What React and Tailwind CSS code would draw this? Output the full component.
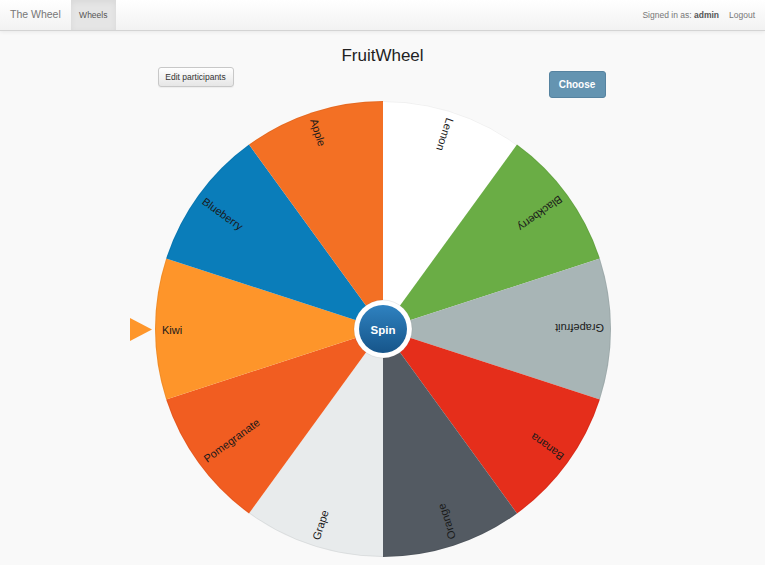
import React from 'react';

const slices = [
  { name: 'Lemon', color: '#ffffff' },
  { name: 'Blackberry', color: '#6aad45' },
  { name: 'Grapefruit', color: '#a8b5b6' },
  { name: 'Banana', color: '#e52e1b' },
  { name: 'Orange', color: '#535a62' },
  { name: 'Grape', color: '#e8ebec' },
  { name: 'Pomegranate', color: '#f15d21' },
  { name: 'Kiwi', color: '#fe952a' },
  { name: 'Blueberry', color: '#0a7dba' },
  { name: 'Apple', color: '#f37024' },
];

const CX = 228;
const CY = 229;
const R = 228;

const point = (deg) => {
  const a = (deg * Math.PI) / 180;
  return [CX + R * Math.sin(a), CY - R * Math.cos(a)];
};

const Wheel = () => {
  const step = 360 / slices.length;
  return (
    <svg width="456" height="458" viewBox="0 0 456 458" className="block">
      <defs>
        <linearGradient id="spinGrad" x1="0" y1="0" x2="0" y2="1">
          <stop offset="0%" stopColor="#2f82c0" />
          <stop offset="100%" stopColor="#16558a" />
        </linearGradient>
      </defs>
      {slices.map((s, i) => {
        const [x0, y0] = point(i * step);
        const [x1, y1] = point((i + 1) * step);
        return (
          <path
            key={s.name}
            d={`M${CX},${CY} L${x0},${y0} A${R},${R} 0 0 1 ${x1},${y1} Z`}
            fill={s.color}
          />
        );
      })}
      <circle cx={CX} cy={CY} r={R - 0.5} fill="none" stroke="#000" strokeOpacity="0.06" />
      {slices.map((s, i) => {
        const mid = i * step + step / 2;
        return (
          <text
            key={s.name}
            transform={`translate(${CX} ${CY}) rotate(${mid + 90})`}
            x={-221}
            y={1}
            dominantBaseline="central"
            fontSize="11"
            fill="#1a1a1a"
            fontFamily="'Liberation Sans', Arial, sans-serif"
          >
            {s.name}
          </text>
        );
      })}
      <circle cx={CX} cy={CY} r="29" fill="#ffffff" />
      <circle cx={CX} cy={CY} r="29" fill="none" stroke="#000" strokeOpacity="0.08" />
      <circle cx={CX} cy={CY} r="24" fill="url(#spinGrad)" />
      <text
        x={CX}
        y={CY + 1}
        textAnchor="middle"
        dominantBaseline="central"
        fontSize="11.5"
        fontWeight="bold"
        fill="#ffffff"
        fontFamily="'Liberation Sans', Arial, sans-serif"
      >
        Spin
      </text>
    </svg>
  );
};

const App = () => {
  return (
    <div className="min-h-[565px] bg-[#f9f9f9] font-['Liberation_Sans',Arial,sans-serif]">
      <div className="h-[31px] flex items-stretch justify-between bg-gradient-to-b from-white to-[#f2f2f2] border-b border-[#d4d4d4] shadow-[0_1px_4px_rgba(0,0,0,0.07)]">
        <div className="flex items-stretch">
          <div className="pl-[10px] pr-[10px] flex items-center text-[10.5px] text-[#777]">The Wheel</div>
          <div className="w-[45px] flex items-center justify-center text-[8.5px] text-[#555] bg-[#e5e5e5] shadow-[inset_0_2px_6px_rgba(0,0,0,0.06)]">Wheels</div>
        </div>
        <div className="flex items-center gap-[10px] pr-[10px] text-[8.5px] text-[#777]">
          <span>
            Signed in as: <span className="font-bold text-[#555]">admin</span>
          </span>
          <span>Logout</span>
        </div>
      </div>

      <div className="w-[456px] mx-auto">
        <h1 className="text-center text-[17px] text-[#222] leading-none pt-[16px]">FruitWheel</h1>
        <div className="flex justify-between items-start pl-[3px] pr-[5px] mt-[3px]">
          <button className="h-[20px] w-[76px] text-[8.5px] text-[#333] rounded-[3px] border border-[#c8c8c8] bg-gradient-to-b from-white to-[#e6e6e6] shadow-[0_1px_1px_rgba(0,0,0,0.05)]">
            Edit participants
          </button>
          <button className="mt-[4px] h-[27px] w-[57px] text-[10px] font-bold text-white rounded-[3px] bg-[#6494b1] border border-[#5683a0]">
            Choose
          </button>
        </div>
        <div className="relative mt-[2px]">
          <Wheel />
          <svg width="23" height="24" viewBox="0 0 23 24" className="absolute left-[-25px] top-[218px]">
            <polygon points="0,0 0,23 22,11.5" fill="#fe962b" />
          </svg>
        </div>
      </div>
    </div>
  );
};

export default App;
